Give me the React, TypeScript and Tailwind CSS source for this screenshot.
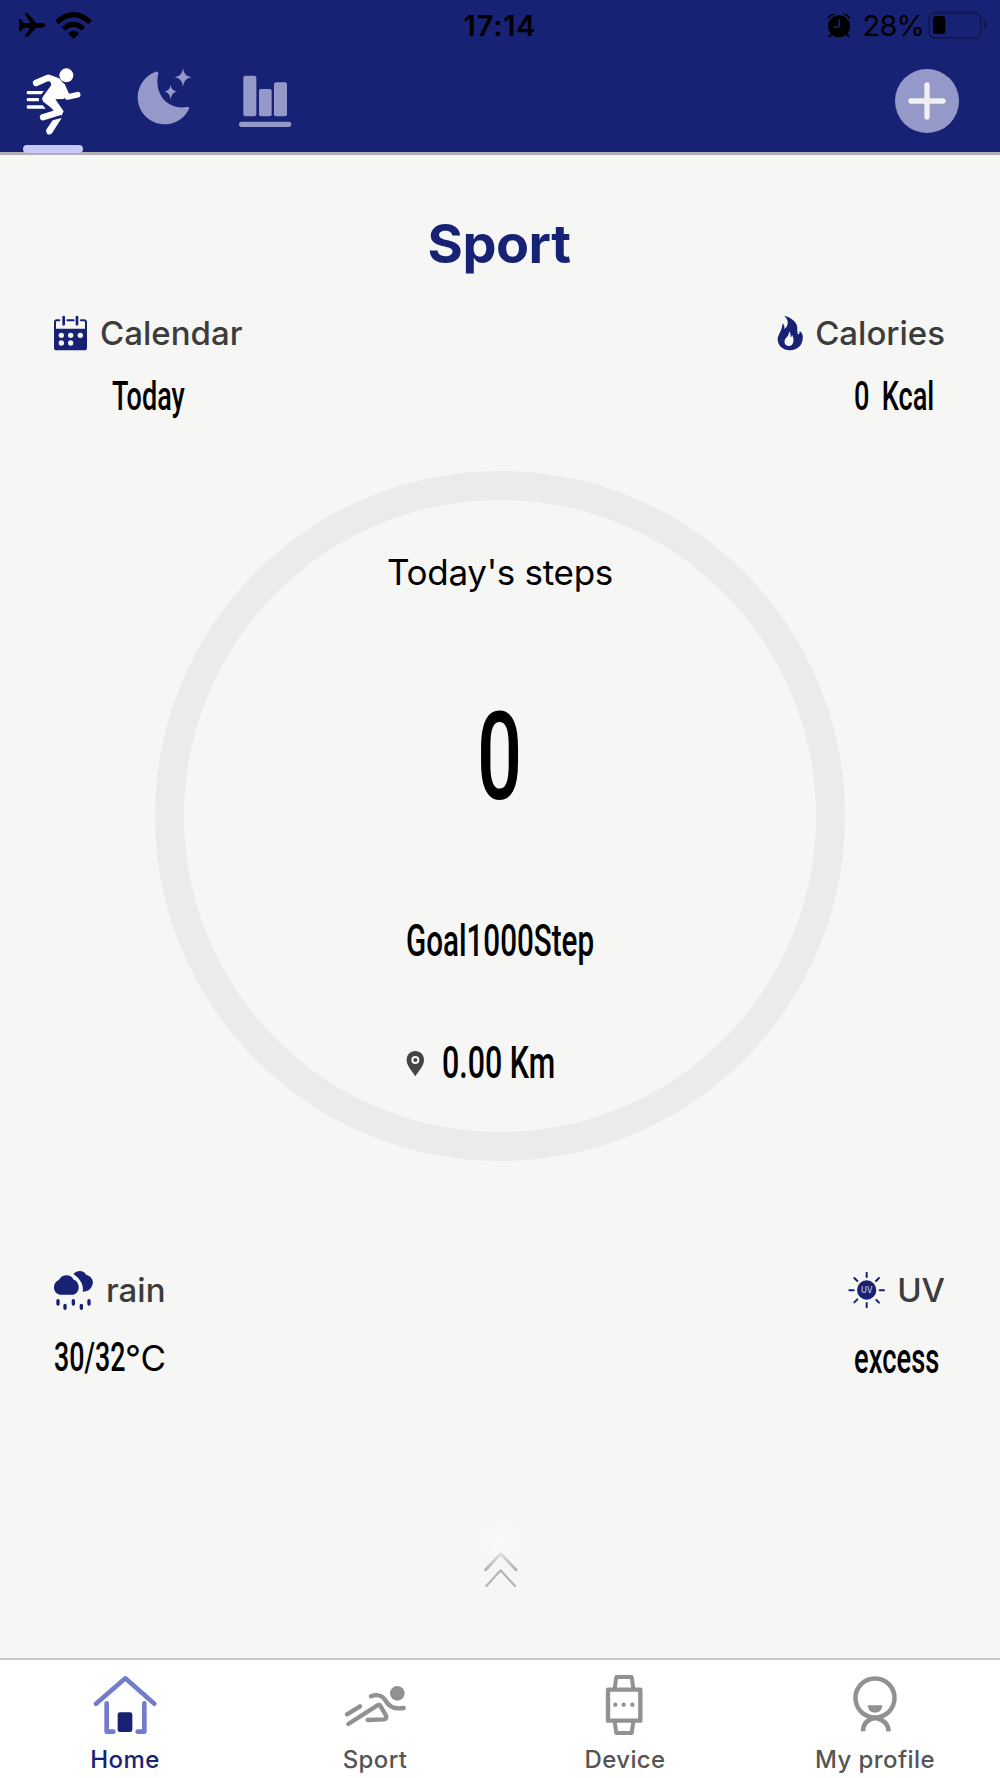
import React from "react";

type SvgProps = { box: string; className: string; children: React.ReactNode };

const Svg = ({ box, className, children }: SvgProps) => (
  <svg viewBox={box} className={`block shrink-0 ${className}`} fill="none" strokeLinecap="round" strokeLinejoin="round">
    {children}
  </svg>
);

/* Horizontally condensed text inside a box of fixed width */
const Narrow = ({ box, text, children }: { box: string; text: string; children: React.ReactNode }) => (
  <span className={`block shrink-0 ${box}`}>
    <span className={`block w-max origin-left whitespace-pre font-['Roboto',sans-serif] font-medium text-black ${text}`}>{children}</span>
  </span>
);

const Airplane = () => (
  <Svg box="54 36 84 78" className="h-[26px] w-[28px]">
    <path
      fill="#000"
      d="M57 58h6l8 11h20L75 43q-1-3 3-3h6l24 29h18q10 1 10 7t-10 7h-18l-24 27h-6q-4 0-3-3l16-24H71l-8 11h-6V58z"
    />
  </Svg>
);

const Wifi = () => (
  <Svg box="162 27 116 87" className="h-[29px] w-[39px]">
    <g stroke="#000" strokeWidth="15" strokeLinecap="butt">
      <path d="M170 61Q220 15 270 61" />
      <path d="M190 81Q220 53 250 81" />
    </g>
    <path fill="#000" d="M203 94Q220 79 237 94L220 111z" />
  </Svg>
);

const Alarm = () => (
  <Svg box="144 36 72 75" className="h-[25px] w-[24px]">
    <circle cx="180" cy="76" r="33" fill="#000" />
    <path d="M148 53Q148 39 166 40Q154 44 148 53zM212 53Q212 39 194 40Q206 44 212 53z" fill="#000" stroke="#000" strokeWidth="2" />
    <path d="M158 99l-7 7M202 99l7 7" stroke="#000" strokeWidth="6" />
    <path d="M181 57v21h-16" stroke="#172275" strokeWidth="5" />
  </Svg>
);

const Battery = () => (
  <Svg box="444 30 180 84" className="h-[28px] w-[60px]">
    <rect x="447" y="35" width="155" height="76" rx="17" stroke="#10174f" strokeWidth="5" />
    <path d="M612 58q9 4 9 14t-9 14z" fill="#10174f" />
    <rect x="459" y="45" width="37" height="54" rx="10" fill="#000" />
  </Svg>
);

const Runner = () => (
  <Svg box="69 198 180 213" className="h-[71px] w-[60px]">
    <circle cx="199" cy="226" r="21" fill="#fff" />
    <g stroke="#fff">
      <path d="M108 249L145 233L172 243" strokeWidth="19" />
      <path d="M187 257L202 291L233 284" strokeWidth="17" />
      <path d="M164 257L144 296L177 337L129 352" strokeWidth="19" />
    </g>
    <path d="M145 226L185 243L203 280L191 297L166 298L191 334L184 347L162 330L130 305Q123 297 130 288L154 255z" fill="#fff" />
    <path d="M158 361L185 354L156 400Q149 407 141 401Q135 394 140 387z" fill="#fff" />
    <path d="M82 273h50l-8 10H82q-5-5 0-10zM82 294h34q3 5 0 10H82q-5-5 0-10zM82 316h46l9 10H82q-5-5 0-10z" fill="#fff" />
  </Svg>
);

const Moon = () => (
  <Svg box="411 201 168 174" className="h-[58px] w-[56px]">
    <g fill="#9599c9">
      <path d="M466 216A81 81 0 1 0 568 325Q567 319 559 321C506 330 460 285 475 220Q475 212 466 216z" />
      <path d="M549 205Q552 229 574 232Q552 235 549 260Q546 235 524 232Q546 229 549 205z" />
      <path d="M512 255Q515 272 530 275Q515 278 512 297Q509 278 494 275Q509 272 512 255z" />
    </g>
  </Svg>
);

const Bars = () => (
  <Svg box="714 222 162 162" className="h-[54px] w-[54px]">
    <g fill="#9599c9">
      <rect x="730" y="227" width="39" height="122" rx="6" />
      <rect x="777" y="267" width="38" height="82" rx="6" />
      <rect x="822" y="247" width="39" height="102" rx="6" />
      <rect x="717" y="365" width="157" height="16" rx="8" />
    </g>
  </Svg>
);

const CalendarIcon = () => (
  <Svg box="69 45 105 108" className="h-[36px] w-[35px]">
    <path d="M88 61H80Q75 61 75 67V92H168V67Q168 61 162 61H153M112 61H131" stroke="#172275" strokeWidth="6" />
    <path d="M101 51v22M141 51v22" stroke="#172275" strokeWidth="8" />
    <path d="M72 86H171V143Q171 151 163 151H80Q72 151 72 143z" fill="#172275" />
    <g fill="#f6f6f4">
      <circle cx="94" cy="106" r="8" /><circle cx="122" cy="106" r="8" /><circle cx="151" cy="106" r="8" />
      <circle cx="94" cy="129" r="8" /><circle cx="122" cy="129" r="8" />
    </g>
  </Svg>
);

const Flame = () => (
  <Svg box="81 45 81 108" className="h-[36px] w-[27px]">
    <path
      fill="#172275"
      d="M102 47C124 52 143 67 142 85Q141 99 145 104Q150 101 149 93C157 97 160 110 158 117C156 137 142 150 121 151C97 150 83 136 83 116C84 104 96 93 98 69Q104 75 103 87C115 78 119 61 102 47z"
    />
    <path fill="#f6f6f4" d="M118 94Q123 102 122 112Q125 111 126 105C134 117 132 138 117 138C101 138 100 121 110 112Q117 105 118 94z" />
  </Svg>
);

const Pin = () => (
  <Svg box="108 444 57 81" className="h-[27px] w-[19px]">
    <path fill="#444" d="M136 447C151 447 162 458 162 474C162 491 145 509 136 523C127 509 110 491 110 474C110 458 121 447 136 447z" />
    <circle cx="136" cy="474" r="9" stroke="#f6f6f4" strokeWidth="6" />
  </Svg>
);

const Rain = () => (
  <Svg box="69 60 123 123" className="h-[41px] w-[41px]">
    <path fill="#172275" d="M130 72C142 59 162 61 168 74C186 78 193 94 186 108C181 119 173 125 158 125C162 103 149 85 130 72z" />
    <path fill="#172275" d="M87 89C97 71 123 72 131 89C148 92 154 126 131 134H90C69 132 64 99 87 89z" />
    <path d="M84 152v10M105 166v9M130 152v10M154 166v9M177 152v10" stroke="#172275" strokeWidth="10" />
  </Svg>
);

const Uv = () => (
  <Svg box="84 66 111 114" className="h-[38px] w-[37px]">
    <circle cx="140" cy="123" r="29" fill="#172275" />
    <path
      d="M140 71v13M140 162v13M88 124h13M179 124h13M103 87l9 9M169 153l8 8M177 87l-9 9M112 151l-9 9"
      stroke="#172275"
      strokeWidth="6"
    />
    <text x="140" y="132" textAnchor="middle" fill="#dfe1f5" fontFamily="Inter" fontSize="26" textLength="34" lengthAdjust="spacingAndGlyphs">
      UV
    </text>
  </Svg>
);

const Chevrons = () => (
  <Svg box="0 0 180 240" className="h-[80px] w-[60px]">
    <defs>
      <linearGradient id="fade" x1="0" y1="125" x2="0" y2="182" gradientUnits="userSpaceOnUse">
        <stop stopColor="#e4e4e4" />
        <stop offset="1" stopColor="#b0b0b0" />
      </linearGradient>
      <radialGradient id="glow">
        <stop stopColor="#fafafa" />
        <stop offset="1" stopColor="#fafafa" stopOpacity="0" />
      </radialGradient>
    </defs>
    <circle cx="92" cy="96" r="70" fill="url(#glow)" />
    <path d="M47 179L92 131L138 179" stroke="url(#fade)" strokeWidth="9" />
    <path d="M49 228L92 181L135 228" stroke="#b4b4b4" strokeWidth="6.5" />
  </Svg>
);

const HomeIcon = () => (
  <Svg box="96 99 198 192" className="h-[64px] w-[66px]">
    <path d="M108 191L196 115L283 191M140 190V275H160M253 190V275H233" stroke="#747ccc" strokeWidth="14" />
    <rect x="173" y="217" width="44" height="59" rx="7" fill="#172275" />
  </Svg>
);

const SportIcon = () => (
  <Svg box="848 99 198 192" className="h-[64px] w-[66px]">
    <circle cx="1014" cy="160" r="22" fill="#919191" />
    <path
      d="M935 169Q963 158 978 181Q995 211 1033 204M863 223L902 199M867 252L954 196Q960 192 964 199L980 227Q984 237 974 238L925 240"
      stroke="#919191"
      strokeWidth="13"
    />
  </Svg>
);

const Watch = () => (
  <Svg box="94 99 198 192" className="h-[64px] w-[66px]">
    <g stroke="#919191" strokeWidth="13">
      <path d="M142 149H239V242H142z" />
      <path d="M162 146L167 111H213L218 146M162 245L167 279H213L218 245" strokeWidth="12" />
    </g>
    <g fill="#919191">
      <circle cx="164" cy="194" r="6.5" /><circle cx="189" cy="194" r="6.5" /><circle cx="215" cy="194" r="6.5" />
    </g>
  </Svg>
);

const Profile = () => (
  <Svg box="846 99 198 192" className="h-[64px] w-[66px]">
    <circle cx="945" cy="174" r="58.5" stroke="#919191" strokeWidth="13.5" />
    <path d="M909 274Q909 248 931 238Q945 232 960 238Q985 248 986 274" stroke="#919191" strokeWidth="13.5" strokeLinecap="butt" />
    <path d="M923 196H967Q966 217 945 218Q924 217 923 196z" fill="#919191" />
  </Svg>
);

const label = "text-[33px] leading-10 font-medium text-[#3c3c3c] whitespace-nowrap";

const tabs = [
  { name: "Home", icon: <HomeIcon />, color: "text-[#172275]" },
  { name: "Sport", icon: <SportIcon />, color: "text-[#555]" },
  { name: "Device", icon: <Watch />, color: "text-[#555]" },
  { name: "My profile", icon: <Profile />, color: "text-[#555]" },
];

export default function App() {
  return (
    <div className="flex h-[1778px] w-[1000px] flex-col overflow-hidden bg-[#f6f6f4] font-['Inter',sans-serif]">
      <header className="h-[155px] shrink-0 border-b-[3px] border-[#b1adb3] bg-[#172275]">
        <div className="grid h-[50px] grid-cols-3 items-center text-black">
          <div className="flex items-center gap-[8px] pl-[18px]">
            <Airplane />
            <Wifi />
          </div>
          <div className="text-center text-[29px] leading-none font-semibold tracking-[0.8px]">17:14</div>
          <div className="flex items-center justify-end pr-[12px]">
            <Alarm />
            <span className="mr-[4px] ml-[12px] text-[29px] leading-none tracking-[-0.9px]">28%</span>
            <Battery />
          </div>
        </div>
        <div className="flex h-[102px] items-start pr-[41px] pl-[23px]">
          <div className="relative h-[103px] w-[60px] pt-4">
            <Runner />
            <div className="absolute bottom-0 left-0 h-[8px] w-[60px] rounded-full bg-[#c8c9f8]" />
          </div>
          <div className="ml-[54px] pt-[17px]"><Moon /></div>
          <div className="ml-[45px] pt-[24px]"><Bars /></div>
          <div className="mt-[19px] ml-auto flex size-16 items-center justify-center rounded-full bg-[#9599c9]">
            <Svg box="0 0 38 38" className="size-[38px]">
              <path d="M19 3V35M3 19H35" stroke="#f0f0f0" strokeWidth="5.3" />
            </Svg>
          </div>
        </div>
      </header>

      <main className="flex h-[1503px] shrink-0 flex-col">
        <h1 className="mt-[59px] pr-[2px] text-center text-[54px] leading-[60px] font-bold tracking-[-0.5px] text-[#172275]">Sport</h1>

        <div className="mt-[39px] flex h-10 items-center justify-between pr-[55px] pl-[53px]">
          <div className="flex items-center gap-[12px]">
            <CalendarIcon />
            <span className={label}>Calendar</span>
          </div>
          <div className="flex items-center gap-[11px]">
            <Flame />
            <span className={label}>Calories</span>
          </div>
        </div>
        <div className="mt-[24px] flex h-10 justify-between pr-[65px] pl-[112px]">
          <Narrow box="w-[73px]" text="text-[40px] leading-10 scale-x-[.675]">Today</Narrow>
          <Narrow box="w-[81px]" text="text-[40px] leading-10 scale-x-[.68] [word-spacing:8px]">0 Kcal</Narrow>
        </div>

        <section className="mt-[54px] flex size-[690px] shrink-0 flex-col items-center self-center rounded-full border-[29px] border-[#ebebeb] pt-[52px]">
          <div className="h-10 text-[35px] leading-10 tracking-[-0.3px] text-black">Today's steps</div>
          <div className="mt-[116px] flex h-[100px] justify-center">
            <Narrow box="w-[46px]" text="text-[122px] leading-[100px] scale-x-[.65]">0</Narrow>
          </div>
          <div className="mt-[108px] h-[50px]">
            <Narrow box="w-[188px]" text="text-[45px] leading-[50px] scale-x-[.658]">Goal1000Step</Narrow>
          </div>
          <div className="mt-[72px] mr-[38px] flex h-[50px] items-center gap-[17px]">
            <Pin />
            <Narrow box="w-[114px]" text="text-[45px] leading-[50px] scale-x-[.675]">0.00 Km</Narrow>
          </div>
        </section>

        <div className="mt-[109px] flex h-10 items-center justify-between pr-[55px] pl-[53px]">
          <div className="flex items-center gap-[12px]">
            <Rain />
            <span className={label}>rain</span>
          </div>
          <div className="flex items-center gap-[12px]">
            <Uv />
            <span className={label}>UV</span>
          </div>
        </div>
        <div className="mt-[28px] flex h-10 justify-between pr-[61px] pl-[54px]">
          <div className="flex">
            <Narrow box="w-[71px]" text="text-[40px] leading-10 scale-x-[.67]">30/32</Narrow>
            <span className="text-[35px] leading-10 text-black">°C</span>
          </div>
          <Narrow box="w-[85px]" text="text-[43px] leading-10 scale-x-[.637]">excess</Narrow>
        </div>

        <div className="mt-[132px] self-center"><Chevrons /></div>
      </main>

      <nav className="grid h-[120px] shrink-0 grid-cols-4 border-t-2 border-[#c8c8c8] bg-white">
        {tabs.map((t) => (
          <div key={t.name} className="flex flex-col items-center pt-[13px]">
            {t.icon}
            <span className={`mt-[9px] text-[24px] leading-[28px] font-medium tracking-[0.4px] whitespace-nowrap ${t.color}`}>{t.name}</span>
          </div>
        ))}
      </nav>
    </div>
  );
}
